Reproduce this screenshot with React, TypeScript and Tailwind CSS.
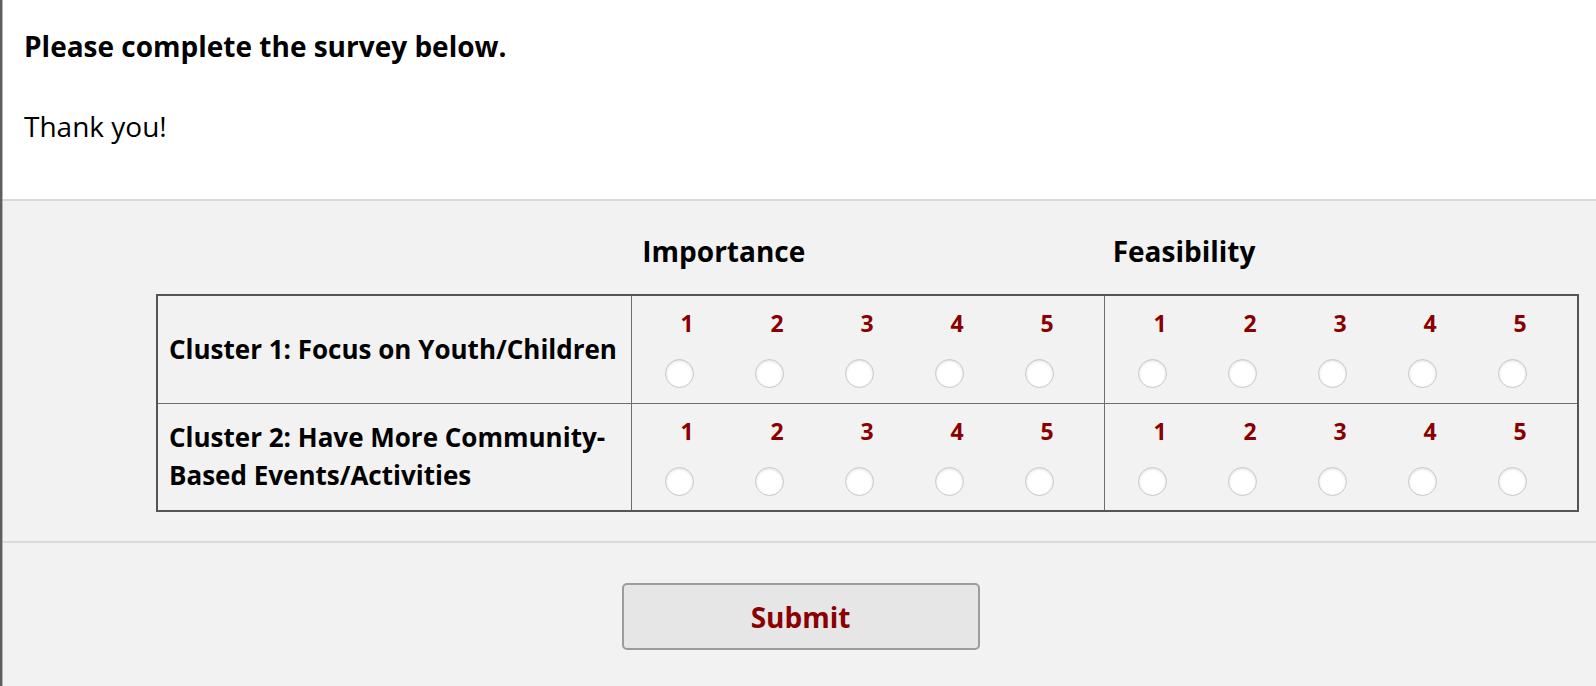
import React from 'react';

const clusters = [
    { id: 1, label: ['Cluster 1: Focus on Youth/Children'] },
    { id: 2, label: ['Cluster 2: Have More Community-', 'Based Events/Activities'] },
];

const RatingCell = ({ name }: { name: string }) =>
{
    return (
        <div className="border-l border-[#6e6e6e] pl-[2px] pt-[16px]">
            <div className="grid grid-cols-5 w-[450px]">
                {[1, 2, 3, 4, 5].map((n) => (
                    <div key={n} className="flex flex-col items-center">
                        <span className="pl-4 text-[23px] leading-none font-bold text-[#8a0000]">{n}</span>
                        <input
                            type="radio"
                            name={name}
                            className="mt-[24px] appearance-none w-[29px] h-[29px] rounded-full bg-white border border-[#c8c8c8] shadow-[inset_0_1px_3px_rgba(0,0,0,0.14)]"
                        />
                    </div>
                ))}
            </div>
        </div>
    );
};

const App: React.FC = () =>
{
    return (
        <div className="h-[686px] w-full overflow-hidden border-l-2 border-[#5e5e5e] bg-[#f2f2f2] font-['Open_Sans',sans-serif] text-black">
            <div className="h-full border-l border-[#b4b4b4]">
                <div className="bg-white pl-[21px] pt-[27px] h-[201px] border-b-2 border-[#dadada]">
                    <p className="text-[28px] font-bold leading-[38px]">Please complete the survey below.</p>
                    <p className="mt-[42px] text-[28px] leading-[38px]">Thank you!</p>
                </div>

                <div className="pt-[31px] pb-[29px] border-b-2 border-[#dadada]">
                    <div className="ml-[153px] w-[1423px] grid grid-cols-3 text-[28px] font-bold leading-[38px]">
                        <div></div>
                        <div className="pl-[12px]">Importance</div>
                        <div className="pl-[8px]">Feasibility</div>
                    </div>

                    <div className="mt-[24px] ml-[153px] w-[1423px] border-2 border-[#555555]">
                        {clusters.map((c, i) => (
                            <div
                                key={c.id}
                                className={`grid grid-cols-3 h-[107px] ${i > 0 ? 'border-t border-[#6e6e6e]' : ''}`}
                            >
                                <div className="flex flex-col justify-center pl-[11px] pb-[2px] text-[26px] font-bold leading-[38px]">
                                    {c.label.map((l) => (
                                        <span key={l}>{l}</span>
                                    ))}
                                </div>
                                <RatingCell name={`imp-${c.id}`} />
                                <RatingCell name={`fea-${c.id}`} />
                            </div>
                        ))}
                    </div>
                </div>

                <div className="flex justify-center pt-[40px] pl-[2px]">
                    <button className="w-[358px] h-[67px] rounded-[5px] border-2 border-[#9c9c9c] bg-[#e6e6e6] text-[28px] font-bold text-[#8a0000]">
                        Submit
                    </button>
                </div>
            </div>
        </div>
    );
};

export default App;
